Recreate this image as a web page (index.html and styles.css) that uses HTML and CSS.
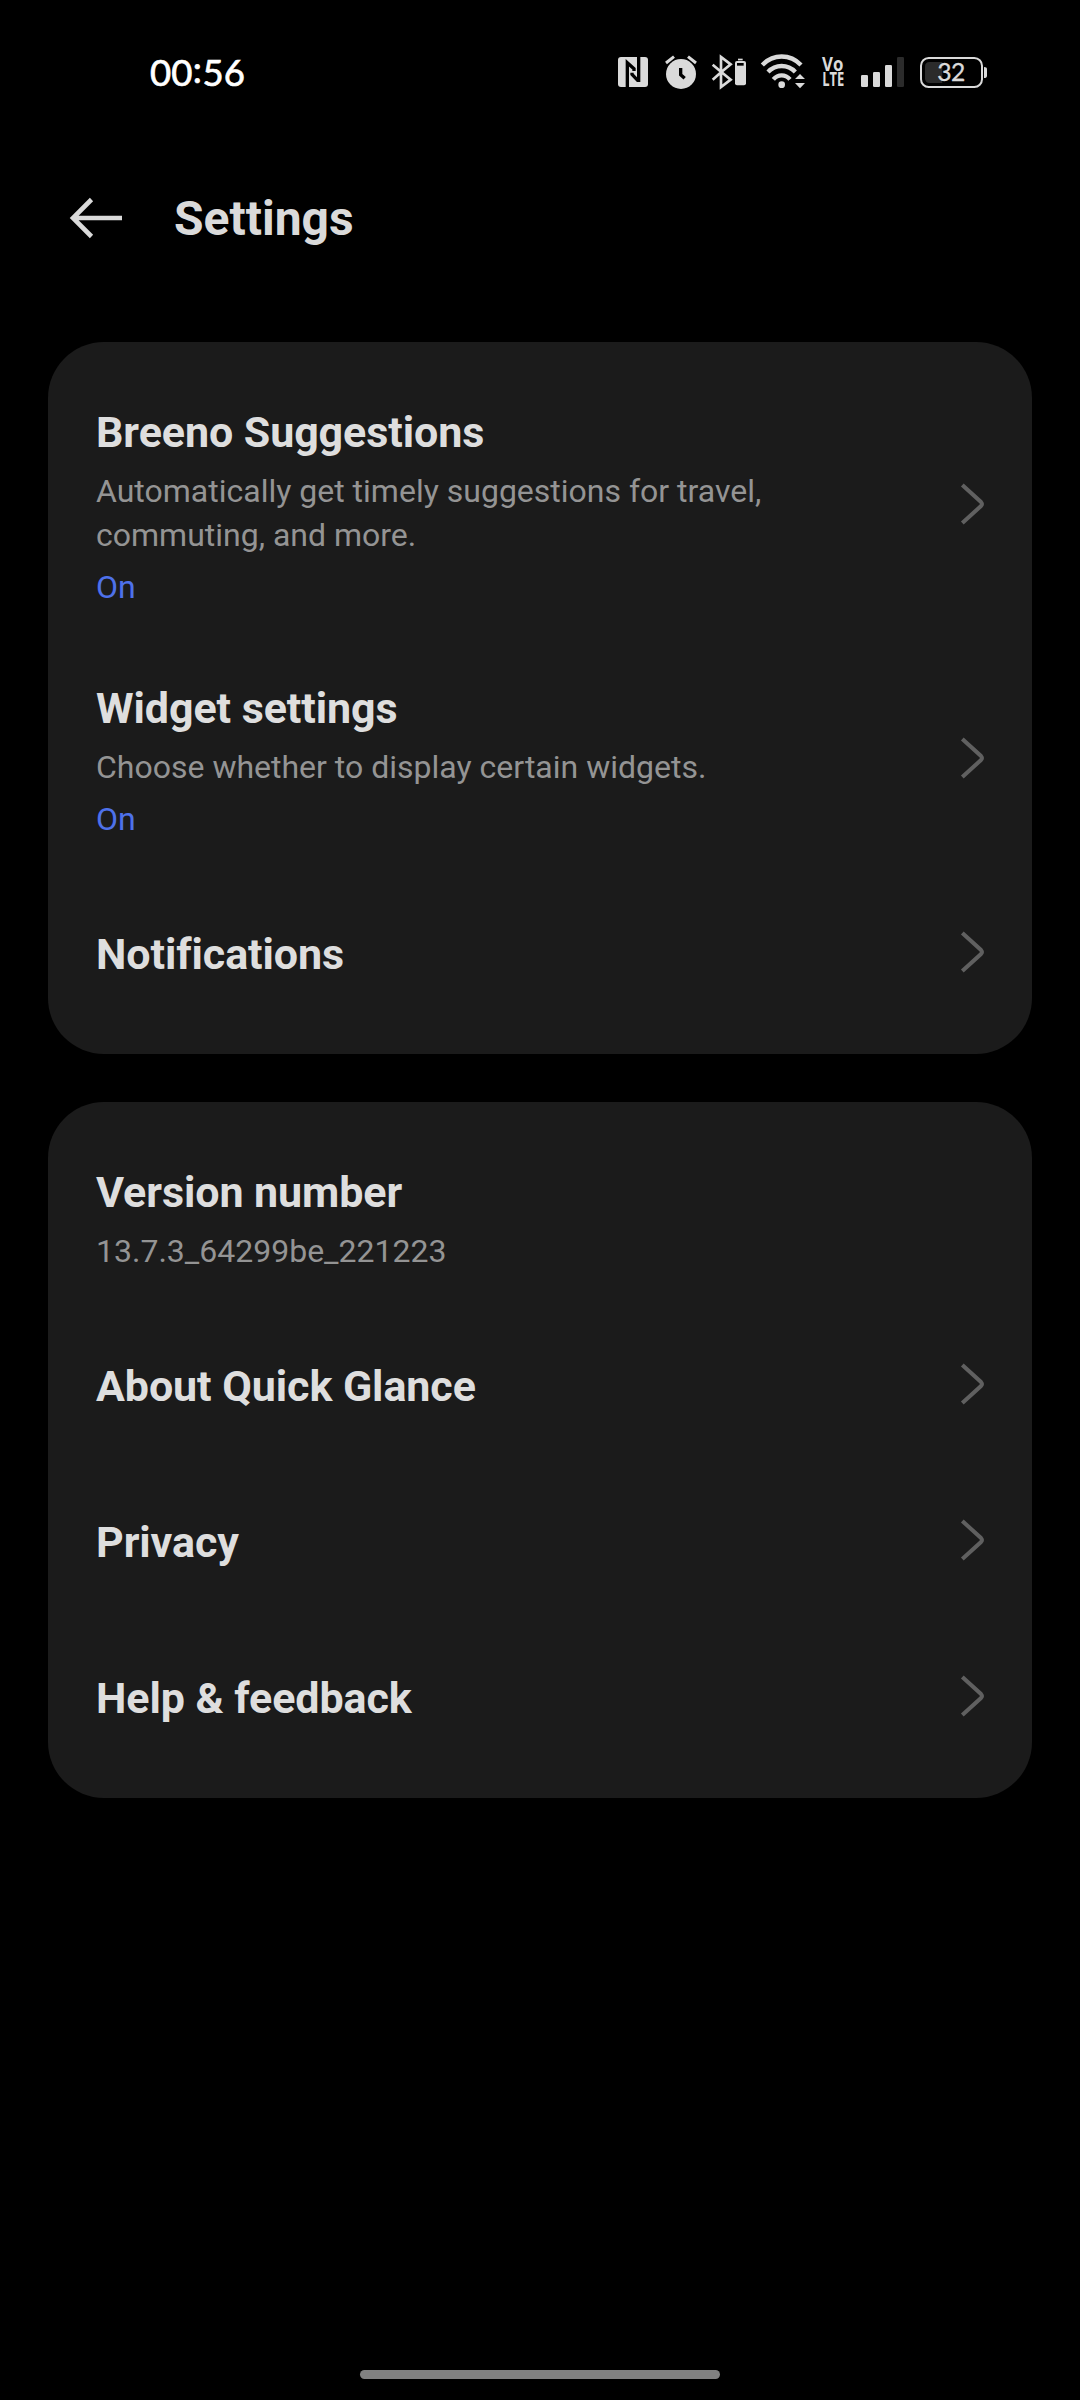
FILE: index.html
```html
<!DOCTYPE html>
<html lang="en">
<head>
<meta charset="utf-8">
<title>Settings</title>
<link rel="stylesheet" href="styles.css">
</head>
<body>
<div class="screen">
  <div class="status-bar">
    <div class="clock">00<span class="colon">:</span>56</div>
    <div class="status-icons">
      <svg class="nfc" width="30" height="38" viewBox="54 36 90 114">
        <rect x="54" y="51" width="90" height="90" rx="9" fill="#dadada"/>
        <path d="M82 141V68L102 86V93M116 51V121H113L96 103V98" fill="none" stroke="#000" stroke-width="10"/>
      </svg>
      <svg class="alarm" width="34" height="38" viewBox="192 36 102 114">
        <circle cx="243" cy="102" r="45" fill="#dadada"/>
        <path d="M198 69L222 50M288 69L264 50" stroke="#dadada" stroke-width="9"/>
        <path d="M242 84V104L254 115" fill="none" stroke="#000" stroke-width="10"/>
      </svg>
      <svg class="bluetooth" width="36" height="38" viewBox="333 36 108 114">
        <path d="M338 74L364 96L392 119L363 141V51L392 73L364 96L338 119" fill="none" stroke="#dadada" stroke-width="8"/>
        <rect x="405" y="63" width="33" height="73" rx="6" fill="#dadada"/>
        <rect x="414" y="56" width="14" height="5" fill="#dadada"/>
        <rect x="411" y="69" width="20" height="8" fill="#000"/>
      </svg>
      <svg class="wifi" width="46" height="38" viewBox="480 36 138 114">
        <path d="M487 75C519 41 571 41 603 75M504 96C527 72 563 72 586 96M520 118C534 102 556 102 570 118" fill="none" stroke="#dadada" stroke-width="13"/>
        <circle cx="545" cy="134" r="10" fill="#dadada"/>
        <path d="M600 102L615 117H585ZM585 129H615L600 145Z" fill="#dadada"/>
      </svg>
      <svg class="volte" width="24" height="38" viewBox="63 36 72 114">
        <text x="66" y="92" textLength="64" lengthAdjust="spacingAndGlyphs">Vo</text>
        <text x="67" y="139" textLength="66" lengthAdjust="spacingAndGlyphs">LTE</text>
      </svg>
      <svg class="signal" width="43" height="38" viewBox="183 36 129 114" fill="#dadada">
        <rect x="183" y="105" width="21" height="36" rx="4"/>
        <rect x="219" y="96" width="21" height="45" rx="4"/>
        <rect x="255" y="75" width="21" height="66" rx="4"/>
        <rect x="291" y="51" width="21" height="90" rx="4" fill="#2b2b2b"/>
      </svg>
      <svg class="battery" width="67" height="38" viewBox="360 36 201 114">
        <rect x="363" y="54" width="183" height="87" rx="23" fill="none" stroke="#dadada" stroke-width="6"/>
        <path d="M427 66H389Q375 66 375 80V115Q375 129 389 129H427Z" fill="#2b2b2b"/>
        <path d="M552 81Q561 81 561 88V107Q561 114 552 114Z" fill="#dadada"/>
        <text x="412" y="124" textLength="84">32</text>
      </svg>
    </div>
  </div>

  <header class="toolbar">
    <svg class="back" width="56" height="44" viewBox="0 0 56 44">
      <path d="M22.5 3.5L4 22L22.5 40.5M4 22H53" fill="none" stroke="#dadada" stroke-width="4.6"/>
    </svg>
    <h1 class="page-title">Settings</h1>
  </header>

  <main class="content">
    <section class="card">
      <div class="row row-large">
        <div class="label">
          <div class="title">Breeno Suggestions</div>
          <div class="desc">Automatically get timely suggestions for travel,<br>commuting, and more.</div>
          <div class="state">On</div>
        </div>
        <svg class="chevron" viewBox="0 0 26 44"><path d="M2.3 3L21 20Q22.8 22 21 24L2.3 41"/></svg>
      </div>
      <div class="row row-medium">
        <div class="label">
          <div class="title">Widget settings</div>
          <div class="desc">Choose whether to display certain widgets.</div>
          <div class="state">On</div>
        </div>
        <svg class="chevron" viewBox="0 0 26 44"><path d="M2.3 3L21 20Q22.8 22 21 24L2.3 41"/></svg>
      </div>
      <div class="row row-single">
        <div class="label"><div class="title">Notifications</div></div>
        <svg class="chevron" viewBox="0 0 26 44"><path d="M2.3 3L21 20Q22.8 22 21 24L2.3 41"/></svg>
      </div>
    </section>

    <section class="card">
      <div class="row row-version">
        <div class="label">
          <div class="title">Version number</div>
          <div class="desc">13.7.3_64299be_221223</div>
        </div>
      </div>
      <div class="row row-single">
        <div class="label"><div class="title">About Quick Glance</div></div>
        <svg class="chevron" viewBox="0 0 26 44"><path d="M2.3 3L21 20Q22.8 22 21 24L2.3 41"/></svg>
      </div>
      <div class="row row-single">
        <div class="label"><div class="title">Privacy</div></div>
        <svg class="chevron" viewBox="0 0 26 44"><path d="M2.3 3L21 20Q22.8 22 21 24L2.3 41"/></svg>
      </div>
      <div class="row row-single">
        <div class="label"><div class="title">Help &amp; feedback</div></div>
        <svg class="chevron" viewBox="0 0 26 44"><path d="M2.3 3L21 20Q22.8 22 21 24L2.3 41"/></svg>
      </div>
    </section>
  </main>

  <div class="home-indicator"></div>
</div>
</body>
</html>
```
FILE: styles.css
```css
* { box-sizing: border-box; }

body {
  margin: 0;
  background: #000;
  font-family: Roboto, sans-serif;
}

.screen {
  display: flex;
  flex-direction: column;
  width: 1080px;
  height: 2400px;
  background: #000;
}

.status-bar {
  display: flex;
  justify-content: space-between;
  align-items: flex-start;
  height: 144px;
  padding: 52px 93px 0 150px;
}

.clock {
  font-family: Lato, sans-serif;
  font-size: 36.5px;
  line-height: 41px;
  color: #fff;
  -webkit-text-stroke: 0.7px #fff;
}

.colon {
  margin: 0 0.5px;
  vertical-align: 3px;
  line-height: 0;
}

.status-icons { display: flex; }
.status-icons svg { overflow: visible; }
.alarm { margin-left: 16px; }
.bluetooth, .wifi { margin-left: 13px; }
.volte { margin-left: 15px; }
.signal, .battery { margin-left: 16px; }

.volte text {
  font: 700 56px "Open Sans", sans-serif;
  fill: #dadada;
}

.battery text {
  font: 400 74px Lato, sans-serif;
  fill: #dadada;
  stroke: #dadada;
  stroke-width: 1px;
}

.toolbar {
  display: flex;
  align-items: center;
  height: 148px;
  padding-left: 69px;
}

.page-title {
  margin: 2px 0 0 49px;
  font-size: 48px;
  font-weight: 700;
  line-height: 56px;
  color: #dadada;
}

.content {
  display: flex;
  flex-direction: column;
  gap: 48px;
  padding: 50px 48px 0;
}

.card {
  padding: 24px 0;
  border-radius: 56px;
  background: #1b1b1b;
}

.row {
  display: flex;
  justify-content: space-between;
  padding: 40px 46px 0 48px;
}

.row-large { height: 276px; }
.row-medium { height: 232px; }
.row-version { height: 180px; }

.row-single {
  height: 156px;
  padding-top: 54px;
}

.title {
  font-size: 43px;
  font-weight: 700;
  line-height: 52px;
  letter-spacing: -0.08px;
  color: #dedede;
}

.desc, .state {
  font-size: 32px;
  line-height: 44px;
}

.desc {
  margin-top: 11px;
  color: #949494;
}

.state {
  margin-top: 8px;
  color: #4e71ea;
}

.chevron {
  width: 26px;
  height: 44px;
  fill: none;
  stroke: #606060;
  stroke-width: 4;
}

.row-large .chevron { margin-top: 76px; }
.row-medium .chevron { margin-top: 54px; }
.row-single .chevron { margin-top: 2px; }

.home-indicator {
  width: 360px;
  height: 9px;
  margin: auto auto 21px;
  border-radius: 5px;
  background: #818181;
}
```
